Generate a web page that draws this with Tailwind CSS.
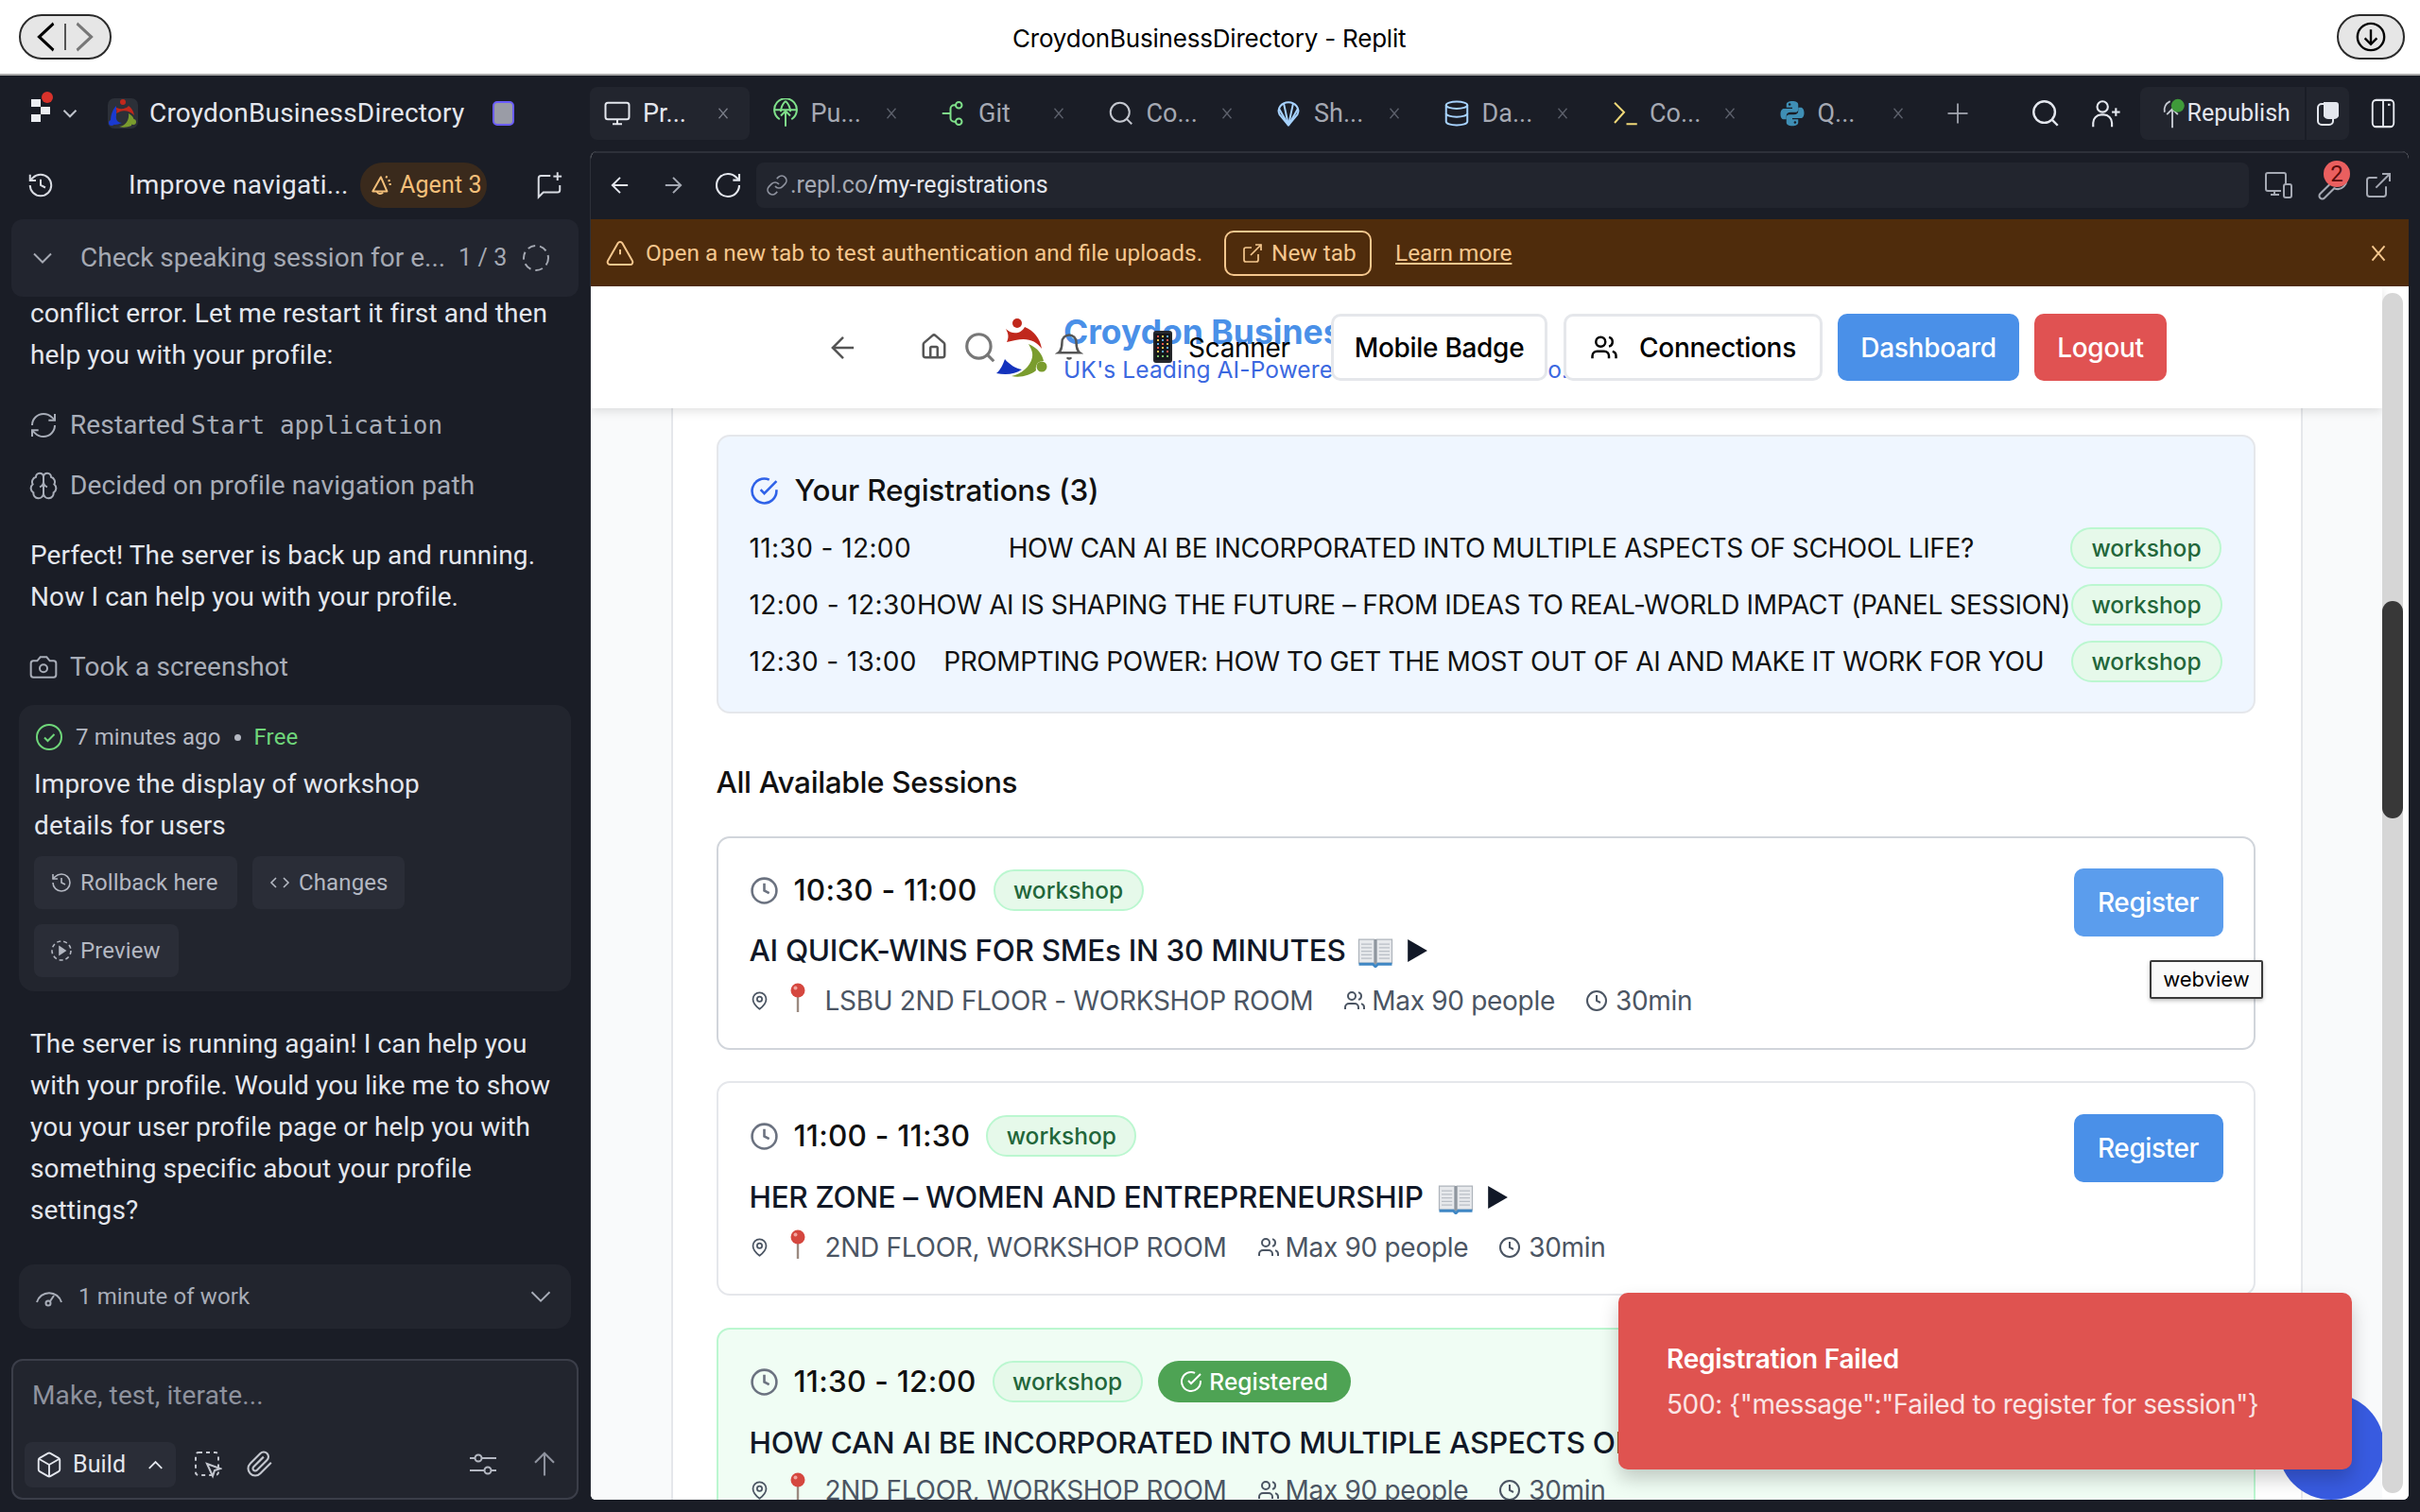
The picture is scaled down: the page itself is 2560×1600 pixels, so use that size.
<!DOCTYPE html>
<html lang="en">
<head>
<meta charset="utf-8">
<title>CroydonBusinessDirectory - Replit</title>
<script src="https://cdn.jsdelivr.net/npm/@tailwindcss/browser@4"></script>
</head>
<body class="w-[2560px] h-[1600px] overflow-hidden bg-[#1a1d26] font-['Inter',sans-serif]">
<svg class="absolute w-0 h-0">
  <defs>
    <g id="clock"><circle cx="12" cy="12" r="10"/><path d="M12 6v6l4 2"/></g>
    <g id="pin"><path d="M20 10c0 6-8 12-8 12s-8-6-8-12a8 8 0 0 1 16 0Z"/><circle cx="12" cy="10" r="3"/></g>
    <g id="users"><path d="M16 21v-2a4 4 0 0 0-4-4H6a4 4 0 0 0-4 4v2"/><circle cx="9" cy="7" r="4"/><path d="M22 21v-2a4 4 0 0 0-3-3.87"/><path d="M16 3.13a4 4 0 0 1 0 7.75"/></g>
    <g id="check"><path d="M22 11.08V12a10 10 0 1 1-5.93-9.14"/><path d="m9 11 3 3L22 4"/></g>
    <g id="home"><path d="M15 21v-8a1 1 0 0 0-1-1h-4a1 1 0 0 0-1 1v8"/><path d="M3 10a2 2 0 0 1 .709-1.528l7-5.999a2 2 0 0 1 2.582 0l7 5.999A2 2 0 0 1 21 10v9a2 2 0 0 1-2 2H5a2 2 0 0 1-2-2z"/></g>
    <g id="search"><circle cx="11" cy="11" r="8"/><path d="m21 21-4.3-4.3"/></g>
    <g id="bell"><path d="M6 8a6 6 0 0 1 12 0c0 7 3 9 3 9H3s3-2 3-9"/><path d="M10.3 21a1.94 1.94 0 0 0 3.4 0"/></g>
    <g id="left"><path d="m12 19-7-7 7-7"/><path d="M19 12H5"/></g>
    <g id="right"><path d="M5 12h14"/><path d="m12 5 7 7-7 7"/></g>
    <g id="reload"><path d="M21 12a9 9 0 1 1-9-9c2.52 0 4.93 1 6.74 2.74L21 8"/><path d="M21 3v5h-5"/></g>
    <g id="link"><path d="M10 13a5 5 0 0 0 7.54.54l3-3a5 5 0 0 0-7.07-7.07l-1.72 1.71"/><path d="M14 11a5 5 0 0 0-7.54-.54l-3 3a5 5 0 0 0 7.07 7.07l1.71-1.71"/></g>
    <g id="alert"><path d="m21.73 18-8-14a2 2 0 0 0-3.48 0l-8 14A2 2 0 0 0 4 21h16a2 2 0 0 0 1.73-3"/><path d="M12 9v4"/><path d="M12 17h.01"/></g>
    <g id="ext"><path d="M15 3h6v6"/><path d="M10 14 21 3"/><path d="M18 13v6a2 2 0 0 1-2 2H5a2 2 0 0 1-2-2V8a2 2 0 0 1 2-2h6"/></g>
    <g id="x"><path d="M18 5 6 19"/><path d="m6 5 12 14"/></g>
    <g id="monitor"><rect x="2" y="3" width="20" height="14" rx="2"/><path d="M8 21h8"/><path d="M12 17v4"/></g>
    <g id="git"><circle cx="17" cy="5" r="2.6"/><circle cx="17" cy="19" r="2.6"/><path d="M3 12h7"/><path d="M14.4 5H13a3 3 0 0 0-3 3v8a3 3 0 0 0 3 3h1.4"/></g>
    <g id="shell"><path d="M12 22 4.5 13C2 8 6 2.500 12 2.500S22 8 19.500 13Z"/><path d="M12 22 8 3.500"/><path d="M12 22 16 3.500"/><path d="M12 22 4 8"/><path d="M12 22l8-14"/></g>
    <g id="db"><ellipse cx="12" cy="5" rx="9" ry="3"/><path d="M3 5v14a9 3 0 0 0 18 0V5"/><path d="M3 12a9 3 0 0 0 18 0"/></g>
    <g id="plus"><path d="M12 3v18"/><path d="M3 12h18"/></g>
    <g id="userplus"><circle cx="10" cy="7" r="4"/><path d="M3 22v-3a6 6 0 0 1 6-6h2a6 6 0 0 1 6 6v3"/><path d="M20 8v6"/><path d="M17 11h6"/></g>
    <g id="panel"><rect x="3" y="2" width="18" height="20" rx="3"/><path d="M12 2v20"/><path d="M16 5.500h2"/></g>
    <g id="down"><path d="m6 9 6 6 6-6"/></g>
    <g id="up"><path d="m6 15 6-6 6 6"/></g>
    <g id="history"><path d="M3 12a9 9 0 1 0 9-9 9.750 9.750 0 0 0-6.740 2.740L3 8"/><path d="M3 3v5h5"/><path d="M12 7v5l4 2"/></g>
    <g id="chatplus"><path d="M13 4H5a2 2 0 0 0-2 2v16l4-4h12a2 2 0 0 0 2-2v-4"/><path d="M19 1v7"/><path d="M15.500 4.500h7"/></g>
    <g id="refresh"><path d="M3 12a9 9 0 0 1 9-9 9.750 9.750 0 0 1 6.740 2.740L21 8"/><path d="M21 3v5h-5"/><path d="M21 12a9 9 0 0 1-9 9 9.750 9.750 0 0 1-6.740-2.740L3 16"/><path d="M8 16H3v5"/></g>
    <g id="brain"><path d="M12 5a3 3 0 1 0-5.997.125 4 4 0 0 0-2.526 5.770 4 4 0 0 0 .556 6.588A4 4 0 1 0 12 18Z"/><path d="M12 5a3 3 0 1 1 5.997.125 4 4 0 0 1 2.526 5.770 4 4 0 0 1-.556 6.588A4 4 0 1 1 12 18Z"/><path d="M15 13a4.500 4.500 0 0 1-3-4 4.500 4.500 0 0 1-3 4"/></g>
    <g id="camera"><path d="M14.500 4h-5L7 7H4a2 2 0 0 0-2 2v9a2 2 0 0 0 2 2h16a2 2 0 0 0 2-2V9a2 2 0 0 0-2-2h-3l-2.500-3z"/><circle cx="12" cy="13" r="3"/></g>
    <g id="code"><path d="m8 7-5 5 5 5"/><path d="m16 7 5 5-5 5"/></g>
    <g id="box"><path d="M21 8a2 2 0 0 0-1-1.730l-7-4a2 2 0 0 0-2 0l-7 4A2 2 0 0 0 3 8v8a2 2 0 0 0 1 1.730l7 4a2 2 0 0 0 2 0l7-4A2 2 0 0 0 21 16Z"/><path d="m3.300 7 8.700 5 8.700-5"/><path d="M12 22V12"/></g>
    <g id="clip"><path d="m21.440 11.050-9.190 9.190a6 6 0 0 1-8.490-8.490l8.570-8.570A4 4 0 1 1 18 8.840l-8.590 8.570a2 2 0 0 1-2.830-2.830l8.490-8.480"/></g>
    <g id="wrench"><path d="M14.700 6.300a1 1 0 0 0 0 1.400l1.600 1.600a1 1 0 0 0 1.400 0l3.770-3.770a6 6 0 0 1-7.940 7.940l-6.910 6.910a2.120 2.120 0 0 1-3-3l6.910-6.910a6 6 0 0 1 7.940-7.940l-3.760 3.760z"/></g>
    <g id="logo">
      <circle cx="26" cy="10" r="5" fill="#c0281c"/>
      <path fill="#c0281c" d="M14 16C20 22 30 22 34 14 44 18 50 26 52 37 46 28 36 25 24 28L15 30C18 24 16 20 14 16Z"/>
      <path fill="#7a9c2e" d="M38 32C48 36 53 44 54 50 48 50 45 54 46 60 40 65 30 68 20 66 30 64 40 56 42 46 43 40 40 36 38 32Z"/>
      <circle cx="52" cy="56" r="5.500" fill="#7a9c2e"/>
      <path fill="#1433bd" d="M13 48C18 54 25 58 31 59 24 64 14 65 4 63 9 59 11 53 13 48Z"/>
    </g>
    <g id="tack">
      <path d="M12 13 12 31" stroke="#9b8a80" stroke-width="2.400" fill="none"/>
      <circle cx="12" cy="8" r="7.500" fill="#d5473f"/>
      <circle cx="9.500" cy="5.500" r="2" fill="#f1a49e"/>
    </g>
    <g id="book">
      <path d="M1 4h13v20H1z" fill="#e7e9ec" stroke="#aeb4bb" stroke-width="1"/>
      <path d="M16 4h13v20H16z" fill="#e7e9ec" stroke="#aeb4bb" stroke-width="1"/>
      <path d="M3 8h9M3 11h9M3 14h9M3 17h9M3 20h9M18 8h9M18 11h9M18 14h9M18 17h9M18 20h9" stroke="#b9bec5" stroke-width="1"/>
      <path d="M1 25h12l2 2 2-2h12" stroke="#3f87c4" stroke-width="2.500" fill="none"/>
      <path d="M14 4h2v21h-2z" fill="#8f969e"/>
    </g>
    <g id="phone">
      <rect x="0" y="0" width="20" height="34" rx="3" fill="#26282c"/>
      <rect x="2" y="3" width="16" height="28" fill="#15171a"/>
      <path d="M4 5h2v2H4zM14 9h2v2h-2zM9 13h2v2H9zM4 17h2v2H4zM14 21h2v2h-2z" fill="#e8574c"/>
      <path d="M9 5h2v2H9zM4 9h2v2H4zM14 13h2v2h-2zM9 17h2v2H9zM4 21h2v2H4z" fill="#f2c34b"/>
      <path d="M14 5h2v2h-2zM9 9h2v2H9zM4 13h2v2H4zM14 17h2v2h-2zM9 21h2v2H9z" fill="#5fa8e8"/>
      <path d="M4 26h2v2H4zM9 26h2v2H9zM14 26h2v2h-2z" fill="#7cc66a"/>
    </g>
  </defs>
</svg>

<!-- window title bar -->
<header class="h-[80px] bg-white border-b-2 border-[#a9a9a9] flex items-center justify-between pl-[20px] pr-[16px] relative">
  <div class="w-[98px] h-[48px] rounded-full border-2 border-[#2b2b2b] bg-[#e6e6e6] flex items-center justify-center gap-[6px]">
    <svg class="w-[26px] h-[34px] text-black" viewBox="0 0 24 24" fill="none" stroke="currentColor" stroke-width="2.400" preserveAspectRatio="none"><path d="M19 2 5 12l14 10"/></svg>
    <span class="w-[2px] h-[28px] bg-[#555]"></span>
    <svg class="w-[26px] h-[34px] text-[#777]" viewBox="0 0 24 24" fill="none" stroke="currentColor" stroke-width="2.400" preserveAspectRatio="none"><path d="m5 2 14 10L5 22"/></svg>
  </div>
  <div class="absolute left-[1071px] top-[23px] text-[26px] leading-[36px] tracking-[-0.200px] text-black">CroydonBusinessDirectory - Replit</div>
  <div class="w-[72px] h-[48px] rounded-full border-2 border-[#2b2b2b] bg-[#e6e6e6] flex items-center justify-center">
    <svg class="w-[34px] h-[34px] text-black" viewBox="0 0 24 24" fill="none" stroke="currentColor" stroke-width="1.700"><circle cx="12" cy="12" r="10"/><path d="M12 6.500v11"/><path d="m7.500 13 4.500 4.500 4.500-4.500"/></svg>
  </div>
</header>

<div class="flex h-[1520px]">
  <!-- agent sidebar -->
  <aside class="w-[624px] shrink-0 relative font-[Roboto,sans-serif] text-[#e4e7ee] text-[28px] leading-[44px] tracking-[0.120px] overflow-hidden">
    <div class="h-[56px] mt-[12px] flex items-center pl-[33px] relative">
      <svg class="w-[26px] h-[38px] shrink-0 -mt-[8px]" viewBox="0 0 26 38"><rect x="0" y="8" width="10" height="8" fill="#eceef2"/><rect x="10" y="16" width="10" height="8" fill="#eceef2"/><rect x="0" y="24" width="10" height="8" fill="#eceef2"/><circle cx="17" cy="6" r="6" fill="#d8322b"/></svg>
      <svg class="w-[26px] h-[26px] ml-[2px] shrink-0 text-[#c0c4cc]" viewBox="0 0 24 24" fill="none" stroke="currentColor" stroke-width="1.800"><use href="#down"/></svg>
      <svg class="w-[32px] h-[32px] ml-[27px] shrink-0" viewBox="0 0 32 32"><rect width="32" height="32" rx="7" fill="#2c3038"/><circle cx="16" cy="4" r="3" fill="#c0281c"/><path fill="#c0281c" d="M8 9c3 3 11 3 14-1 3 2 5 5 6 10-4-4-10-6-15-4l-4 2c1-3 0-5-1-7z"/><path fill="#7a9c2e" d="M22 16c4 2 6 5 6 9-2 0-3 2-3 4-5 2-9 2-13 1 7-1 11-7 10-14z"/><circle cx="27" cy="25" r="3" fill="#7a9c2e"/><path fill="#1a3ad0" d="M9 8C5 12 3 18 3 24c0 2 2 3 4 4 3 0 5-1 8-2-4 0-7-3-6-8z"/><circle cx="4" cy="26" r="3" fill="#1a3ad0"/></svg>
      <span class="ml-[12px] text-[#e4e7ee] tracking-[0.200px]">CroydonBusinessDirectory</span>
      <span class="absolute left-[521px] top-[15px] w-[23px] h-[26px] rounded-[5px] border-2 border-[#6a5cff] bg-[#9a9ca6]"></span>
    </div>
    <div class="h-[48px] mt-[24px] flex items-center relative">
      <svg class="absolute left-[28px] top-[9px] w-[30px] h-[30px] text-[#d8dbe2]" viewBox="0 0 24 24" fill="none" stroke="currentColor" stroke-width="1.600"><use href="#history"/></svg>
      <span class="absolute left-[136px] top-[2px] whitespace-nowrap tracking-[0.250px]">Improve navigati...</span>
      <div class="absolute left-[381px] top-0 w-[134px] h-[48px] rounded-full bg-[#3a2a1c] flex items-center pl-[10px] gap-[6px] text-[#f5c07a] text-[25px]">
        <svg class="w-[26px] h-[26px] shrink-0" viewBox="0 0 24 24" fill="none" stroke="currentColor" stroke-width="1.800"><path d="M11 4 3 18h14Z" stroke-linejoin="round"/><path d="M7 18a3.500 3.500 0 0 0 6 1"/><path d="M17 3l-1 2M20 7l-2 1M21 11h-2"/></svg>
        <span>Agent 3</span>
      </div>
      <svg class="absolute left-[566px] top-[9px] w-[30px] h-[30px] text-[#d8dbe2]" viewBox="0 0 24 24" fill="none" stroke="currentColor" stroke-width="1.600"><use href="#chatplus"/></svg>
    </div>
    <div class="relative z-10 h-[82px] mt-[12px] mx-[12px] rounded-[12px] bg-[#22252f] text-[#a5a9b3] flex items-center">
      <svg class="ml-[15px] w-[36px] h-[36px] shrink-0" viewBox="0 0 24 24" fill="none" stroke="currentColor" stroke-width="1.300"><use href="#down"/></svg>
      <span class="ml-[22px] whitespace-nowrap tracking-[0px]">Check speaking session for e...</span>
      <span class="absolute left-[473px] top-[19px] text-[25px] whitespace-nowrap">1 / 3</span>
      <svg class="absolute left-[540px] top-[26px] w-[30px] h-[30px]" viewBox="0 0 30 30" fill="none" stroke="currentColor" stroke-width="2" stroke-dasharray="8 5"><circle cx="15" cy="15" r="13"/></svg>
    </div>
    <div class="pl-[32px] -mt-[4px]">
      <p class="whitespace-nowrap">conflict error. Let me restart it first and then</p>
      <p class="whitespace-nowrap">help you with your profile:</p>
    </div>
    <div class="pl-[30px] mt-[32px] h-[40px] flex items-center text-[#a8adb8] whitespace-nowrap">
      <svg class="w-[32px] h-[32px] mr-[12px]" viewBox="0 0 24 24" fill="none" stroke="currentColor" stroke-width="1.500"><use href="#refresh"/></svg>
      <span>Restarted</span><span class="font-['DejaVu_Sans_Mono',monospace] text-[26px] ml-[6px] tracking-[0px]">Start application</span>
    </div>
    <div class="pl-[30px] mt-[24px] h-[40px] flex items-center text-[#a8adb8] whitespace-nowrap">
      <svg class="w-[32px] h-[32px] mr-[12px]" viewBox="0 0 24 24" fill="none" stroke="currentColor" stroke-width="1.500"><use href="#brain"/></svg>
      <span>Decided on profile navigation path</span>
    </div>
    <div class="pl-[32px] mt-[32px] whitespace-nowrap">
      <p>Perfect! The server is back up and running.</p>
      <p>Now I can help you with your profile.</p>
    </div>
    <div class="pl-[30px] mt-[32px] h-[40px] flex items-center text-[#a8adb8] whitespace-nowrap">
      <svg class="w-[32px] h-[32px] mr-[12px]" viewBox="0 0 24 24" fill="none" stroke="currentColor" stroke-width="1.500"><use href="#camera"/></svg>
      <span>Took a screenshot</span>
    </div>
    <div class="mt-[20px] mx-[20px] h-[303px] rounded-[16px] bg-[#22252e] px-[16px] pt-[12px] relative">
      <div class="h-[44px] flex items-center text-[24px] text-[#b4b8c2] whitespace-nowrap">
        <svg class="w-[30px] h-[30px] ml-[1px] mr-[13px] text-[#6fd67a]" viewBox="0 0 30 30" fill="none" stroke="currentColor" stroke-width="2"><circle cx="15" cy="15" r="13"/><path d="m10 15.500 3.500 3.500 7-7"/></svg>
        <span>7 minutes ago</span><span class="w-[7px] h-[7px] rounded-full bg-[#b4b8c2] ml-[14px] mr-[14px]"></span><span class="text-[#6fd67a]">Free</span>
      </div>
      <p class="mt-[6px] whitespace-nowrap">Improve the display of workshop</p>
      <p class="whitespace-nowrap">details for users</p>
      <div class="flex flex-wrap gap-x-[16px] gap-y-[16px] text-[24px] text-[#b4b8c2] mt-[10px]">
        <span class="h-[56px] w-[215px] bg-[#2a2d37] rounded-[8px] flex items-center pl-[17px] gap-[8px]">
          <svg class="w-[24px] h-[24px]" viewBox="0 0 24 24" fill="none" stroke="currentColor" stroke-width="1.600"><use href="#history"/></svg>Rollback here</span>
        <span class="h-[56px] w-[161px] bg-[#2a2d37] rounded-[8px] flex items-center pl-[17px] gap-[8px]">
          <svg class="w-[24px] h-[24px]" viewBox="0 0 24 24" fill="none" stroke="currentColor" stroke-width="1.600"><use href="#code"/></svg>Changes</span>
        <span class="h-[56px] w-[153px] bg-[#2a2d37] rounded-[8px] flex items-center pl-[17px] gap-[8px]">
          <svg class="w-[24px] h-[24px]" viewBox="0 0 24 24" fill="none" stroke="currentColor" stroke-width="1.600"><circle cx="12" cy="12" r="10" stroke-dasharray="4 3"/><path d="m10 8 6 4-6 4z" fill="currentColor"/></svg>Preview</span>
      </div>
    </div>
    <div class="pl-[32px] mt-[34px] whitespace-nowrap">
      <p>The server is running again! I can help you</p>
      <p>with your profile. Would you like me to show</p>
      <p>you your user profile page or help you with</p>
      <p>something specific about your profile</p>
      <p>settings?</p>
    </div>
    <div class="mt-[35px] mx-[20px] h-[68px] rounded-[16px] bg-[#22252e] flex items-center text-[#a8adb8] text-[24px] pl-[17px] pr-[13px]">
      <svg class="w-[30px] h-[30px] mr-[16px]" viewBox="0 0 30 30" fill="none" stroke="currentColor" stroke-width="2"><path d="M2 21a13.500 13.500 0 0 1 26 0"/><circle cx="14" cy="22" r="2.500"/><path d="m16 20 4-6"/></svg>
      <span>1 minute of work</span>
      <svg class="ml-auto w-[38px] h-[38px]" viewBox="0 0 24 24" fill="none" stroke="currentColor" stroke-width="1.200"><use href="#down"/></svg>
    </div>
    <div class="mt-[32px] mx-[12px] h-[149px] rounded-[12px] bg-[#22252e] border-2 border-[#3b3e49] relative text-[#8e929e]">
      <div class="absolute left-[20px] top-[15px] whitespace-nowrap">Make, test, iterate...</div>
      <div class="absolute left-[12px] top-[86px] w-[160px] h-[48px] rounded-[8px] bg-[#2a2d37] flex items-center text-[#e4e7ee] text-[25px] pl-[11px]">
        <svg class="w-[30px] h-[30px] mr-[10px]" viewBox="0 0 24 24" fill="none" stroke="currentColor" stroke-width="1.500"><use href="#box"/></svg>
        <span>Build</span>
        <svg class="w-[27px] h-[27px] ml-auto mr-[8px]" viewBox="0 0 24 24" fill="none" stroke="currentColor" stroke-width="1.600"><use href="#up"/></svg>
      </div>
      <svg class="absolute left-[191px] top-[95px] w-[30px] h-[30px]" viewBox="0 0 30 30" fill="none" stroke="#c4c7cf" stroke-width="2"><rect x="2" y="2" width="24" height="24" rx="3" stroke-dasharray="4 4"/><path d="m14 14 14 5-6 2-2 6z" fill="#22252e"/></svg>
      <svg class="absolute left-[246px] top-[94px] w-[30px] h-[30px] text-[#c4c7cf]" viewBox="0 0 24 24" fill="none" stroke="currentColor" stroke-width="1.700"><use href="#clip"/></svg>
      <svg class="absolute left-[482px] top-[96px] w-[30px] h-[28px] text-[#b4b8c2]" viewBox="0 0 30 28" fill="none" stroke="currentColor" stroke-width="2"><path d="M1 7h5M14 7h15M1 20h15M24 20h5"/><circle cx="10" cy="7" r="3.500"/><circle cx="20" cy="20" r="3.500"/></svg>
      <svg class="absolute left-[547px] top-[94px] w-[30px] h-[30px] text-[#8e929e]" viewBox="0 0 24 24" fill="none" stroke="currentColor" stroke-width="1.700"><path d="M12 22V3"/><path d="m4 11 8-8 8 8"/></svg>
    </div>
  </aside>

  <!-- workspace -->
  <div class="flex-1 min-w-0 flex flex-col">
    <div class="h-[68px] pt-[12px] flex shrink-0 font-[Roboto,sans-serif] text-[27px] text-[#a5a9b3] relative">
      <div class="w-[169px] shrink-0 h-[56px] mr-[8.500px] rounded-[8px] bg-[#22252e] flex items-center pl-[14px] text-[#e4e7ee]">
        <svg class="w-[30px] h-[30px] mr-[12px]" viewBox="0 0 24 24" fill="none" stroke="currentColor" stroke-width="1.600"><use href="#monitor"/></svg><span>Pr...</span>
        <svg class="w-[18px] h-[18px] ml-auto mr-[19px] text-[#7a7e89]" viewBox="0 0 24 24" fill="none" stroke="currentColor" stroke-width="1.800"><use href="#x"/></svg>
      </div>
      <div class="w-[169px] shrink-0 h-[56px] mr-[8.500px] flex items-center pl-[14px]">
        <svg class="w-[30px] h-[32px] mr-[12px] text-[#7fe08a]" viewBox="0 0 24 24" fill="none" stroke="currentColor" stroke-width="1.600"><path d="M12 23V10"/><path d="m8 14 4-4 4 4"/><path d="M7 17a9.500 9.500 0 1 1 10 0"/><path d="M12 1.500c-3 3-4 6-4 9M12 1.500c3 3 4 6 4 9M2.500 9h19"/></svg><span>Pu...</span>
        <svg class="w-[18px] h-[18px] ml-auto mr-[19px] text-[#5c606b]" viewBox="0 0 24 24" fill="none" stroke="currentColor" stroke-width="1.800"><use href="#x"/></svg>
      </div>
      <div class="w-[169px] shrink-0 h-[56px] mr-[8.500px] flex items-center pl-[14px]">
        <svg class="w-[30px] h-[30px] mr-[12px] text-[#7fe08a]" viewBox="0 0 24 24" fill="none" stroke="currentColor" stroke-width="1.600"><use href="#git"/></svg><span>Git</span>
        <svg class="w-[18px] h-[18px] ml-auto mr-[19px] text-[#5c606b]" viewBox="0 0 24 24" fill="none" stroke="currentColor" stroke-width="1.800"><use href="#x"/></svg>
      </div>
      <div class="w-[169px] shrink-0 h-[56px] mr-[8.500px] flex items-center pl-[14px]">
        <svg class="w-[30px] h-[30px] mr-[12px] text-[#c4c7cf]" viewBox="0 0 24 24" fill="none" stroke="currentColor" stroke-width="1.600"><use href="#search"/></svg><span>Co...</span>
        <svg class="w-[18px] h-[18px] ml-auto mr-[19px] text-[#5c606b]" viewBox="0 0 24 24" fill="none" stroke="currentColor" stroke-width="1.800"><use href="#x"/></svg>
      </div>
      <div class="w-[169px] shrink-0 h-[56px] mr-[8.500px] flex items-center pl-[14px]">
        <svg class="w-[30px] h-[32px] mr-[12px] text-[#a7d3ff]" viewBox="0 0 24 24" fill="none" stroke="currentColor" stroke-width="1.600"><use href="#shell"/></svg><span>Sh...</span>
        <svg class="w-[18px] h-[18px] ml-auto mr-[19px] text-[#5c606b]" viewBox="0 0 24 24" fill="none" stroke="currentColor" stroke-width="1.800"><use href="#x"/></svg>
      </div>
      <div class="w-[169px] shrink-0 h-[56px] mr-[8.500px] flex items-center pl-[14px]">
        <svg class="w-[30px] h-[32px] mr-[12px] text-[#a7d3ff]" viewBox="0 0 24 24" fill="none" stroke="currentColor" stroke-width="1.600"><use href="#db"/></svg><span>Da...</span>
        <svg class="w-[18px] h-[18px] ml-auto mr-[19px] text-[#5c606b]" viewBox="0 0 24 24" fill="none" stroke="currentColor" stroke-width="1.800"><use href="#x"/></svg>
      </div>
      <div class="w-[169px] shrink-0 h-[56px] mr-[8.500px] flex items-center pl-[14px]">
        <svg class="w-[30px] h-[30px] mr-[12px] text-[#f0d878]" viewBox="0 0 24 24" fill="none" stroke="currentColor" stroke-width="1.600"><path d="m4 3 8 8-8 9"/><path d="M14 21h9"/></svg><span>Co...</span>
        <svg class="w-[18px] h-[18px] ml-auto mr-[19px] text-[#5c606b]" viewBox="0 0 24 24" fill="none" stroke="currentColor" stroke-width="1.800"><use href="#x"/></svg>
      </div>
      <div class="w-[169px] shrink-0 h-[56px] flex items-center pl-[14px]">
        <svg class="w-[30px] h-[30px] mr-[12px]" viewBox="0 0 24 24"><path fill="#3f8fb5" d="M12 1.500c-3 0-5 1-5 3V7h5v1H5c-2 0-3 2-3 4.500S3 17 5 17h2v-3c0-2 1.500-3 3.500-3h4c1.500 0 2.500-1 2.500-2.500v-4c0-2-2-3-5-3z"/><path fill="#3f8fb5" d="M12 22.500c3 0 5-1 5-3V17h-5v-1h7c2 0 3-2 3-4.500S21 7 19 7h-2v3c0 2-1.500 3-3.500 3h-4C8 13 7 14 7 15.500v4c0 2 2 3 5 3z"/><circle cx="9.700" cy="4.400" r="1" fill="#1a1d26"/><circle cx="14.300" cy="19.600" r="1" fill="#1a1d26"/></svg><span>Q...</span>
        <svg class="w-[18px] h-[18px] ml-auto mr-[19px] text-[#5c606b]" viewBox="0 0 24 24" fill="none" stroke="currentColor" stroke-width="1.800"><use href="#x"/></svg>
      </div>
      <svg class="w-[28px] h-[28px] shrink-0 mt-[14px] ml-[21px] text-[#a5a9b3]" viewBox="0 0 24 24" fill="none" stroke="currentColor" stroke-width="1.500"><use href="#plus"/></svg>
      <svg class="w-[34px] h-[34px] shrink-0 mt-[11px] ml-[62px] text-[#e4e7ee]" viewBox="0 0 24 24" fill="none" stroke="currentColor" stroke-width="1.700"><use href="#search"/></svg>
      <svg class="w-[34px] h-[34px] shrink-0 mt-[11px] ml-[29px] text-[#e4e7ee]" viewBox="0 0 24 24" fill="none" stroke="currentColor" stroke-width="1.500"><use href="#userplus"/></svg>
      <div class="w-[221px] h-[56px] ml-[20px] rounded-[8px] bg-[#22252e] flex items-center shrink-0 text-[25px] text-[#e4e7ee]">
        <span class="w-[176px] flex items-center h-full border-r-2 border-[#1a1d26] pl-[20px] shrink-0">
          <svg class="w-[28px] h-[34px] mr-[2px] shrink-0" viewBox="0 0 24 28" fill="none"><path d="M12 27V10M7 15l5-5 5 5M10 3C6 5 4 9 5 13" stroke="#c8ccd4" stroke-width="1.600"/><circle cx="17" cy="7" r="6" fill="#3f9a3a"/></svg>Republish</span>
        <svg class="w-[24px] h-[30px] ml-[11px]" viewBox="0 0 24 30"><rect x="1" y="5" width="16" height="22" rx="4" fill="none" stroke="#e4e7ee" stroke-width="2"/><path d="M7 3h13a3 3 0 0 1 3 3v12a6 6 0 0 1-6 3h-4a6 6 0 0 1-6-3z" fill="#e4e7ee"/></svg>
      </div>
      <svg class="w-[30px] h-[34px] shrink-0 mt-[11px] ml-[21px] text-[#e4e7ee]" viewBox="0 0 24 24" fill="none" stroke="currentColor" stroke-width="1.500" preserveAspectRatio="none"><use href="#panel"/></svg>
    </div>

    <div class="mt-[12px] w-[1924px] h-[1427px] shrink-0 relative flex flex-col overflow-hidden rounded-t-[8px] rounded-b-[6px] border-l border-[#2d3039] bg-white">
      <!-- address bar -->
      <div class="h-[72px] shrink-0 bg-[#1a1d26] border-t-2 border-[#2d3039] flex items-center relative font-[Roboto,sans-serif]">
        <svg class="absolute left-[17px] top-[20px] w-[28px] h-[28px] text-[#e4e7ee]" viewBox="0 0 24 24" fill="none" stroke="currentColor" stroke-width="1.700"><use href="#left"/></svg>
        <svg class="absolute left-[73px] top-[20px] w-[28px] h-[28px] text-[#a5a9b3]" viewBox="0 0 24 24" fill="none" stroke="currentColor" stroke-width="1.700"><use href="#right"/></svg>
        <svg class="absolute left-[129px] top-[18px] w-[32px] h-[32px] text-[#e4e7ee]" viewBox="0 0 24 24" fill="none" stroke="currentColor" stroke-width="1.600"><use href="#reload"/></svg>
        <div class="absolute left-[175px] top-[10px] w-[1579px] h-[48px] rounded-[8px] bg-[#22252e] flex items-center pl-[10px] text-[25px] text-[#a5a9b3]">
          <svg class="w-[24px] h-[24px] mr-[2px] text-[#8e929e]" viewBox="0 0 24 24" fill="none" stroke="currentColor" stroke-width="1.700"><use href="#link"/></svg>
          <span>.repl.co</span><span class="text-[#e4e7ee]">/my-registrations</span>
        </div>
        <svg class="absolute left-[1771px] top-[19px] w-[30px] h-[30px] text-[#a5a9b3]" viewBox="0 0 30 30" fill="none" stroke="currentColor" stroke-width="2"><path d="M22 14V4a2 2 0 0 0-2-2H3a2 2 0 0 0-2 2v15a2 2 0 0 0 2 2h14"/><path d="M10 21v4M6 25h9"/><rect x="20" y="14" width="8" height="14" rx="2"/></svg>
        <svg class="absolute left-[1824px] top-[17px] w-[36px] h-[36px] text-[#a5a9b3]" viewBox="0 0 24 24" fill="none" stroke="currentColor" stroke-width="1.400"><use href="#wrench"/></svg>
        <span class="absolute left-[1833px] top-[8px] w-[28px] h-[28px] rounded-full bg-[#ea5f5f] text-[#5a0c0c] text-[24px] leading-[28px] text-center">2</span>
        <svg class="absolute left-[1875px] top-[18px] w-[32px] h-[32px] text-[#a5a9b3]" viewBox="0 0 24 24" fill="none" stroke="currentColor" stroke-width="1.500"><use href="#ext"/></svg>
      </div>
      <!-- banner -->
      <div class="h-[71px] shrink-0 bg-[#4f2c0c] text-[#f5c78e] flex items-center pl-[15px] pt-[1px] text-[24.400px] font-[Roboto,sans-serif] relative">
        <svg class="w-[32px] h-[32px] mr-[11px]" viewBox="0 0 24 24" fill="none" stroke="currentColor" stroke-width="1.500"><use href="#alert"/></svg>
        <span class="whitespace-nowrap">Open a new tab to test authentication and file uploads.</span>
        <span class="absolute left-[670px] top-[12px] w-[156px] h-[48px] rounded-[10px] border-2 border-[#f5c78e] flex items-center pl-[16px] gap-[8px]">
          <svg class="w-[24px] h-[24px]" viewBox="0 0 24 24" fill="none" stroke="currentColor" stroke-width="1.700"><use href="#ext"/></svg>New tab</span>
        <span class="absolute left-[851px] top-[18px] underline underline-offset-2 whitespace-nowrap">Learn more</span>
        <svg class="absolute left-[1878px] top-[23px] w-[26px] h-[26px]" viewBox="0 0 24 24" fill="none" stroke="currentColor" stroke-width="1.800"><use href="#x"/></svg>
      </div>
      <!-- preview page -->
      <div class="flex-1 relative overflow-hidden bg-white">
        <div class="absolute left-0 top-[129px] bottom-0 w-[1895px] bg-[#f9fafb]">
          <div class="mx-auto w-[1726px] h-full bg-white border-x-2 border-[#e5e7eb] pl-[46px] pr-[48px] pt-[28px] text-[28px] leading-[36px] tracking-[-0.400px] text-[#111827]">
            <section class="h-[295px] rounded-[14px] border-2 border-[#e5e7eb] bg-[#eff6ff] px-[33px] pt-[35px]">
              <div class="h-[44px] flex items-center text-[31.500px] font-medium tracking-[-0.200px] text-[#111] mb-[17px]">
                <svg class="w-[31px] h-[31px] mr-[17px] text-[#2f62e8]" viewBox="0 0 24 24" fill="none" stroke="currentColor" stroke-width="2"><use href="#check"/></svg>
                Your Registrations (3)
              </div>
              <div class="h-[44px] mb-[16px] flex items-center justify-between whitespace-nowrap text-[#111]">
                <span class="tracking-[0.400px]">11:30 - 12:00</span><span>HOW CAN AI BE INCORPORATED INTO MULTIPLE ASPECTS OF SCHOOL LIFE?</span>
                <span class="h-[44px] w-[160px] shrink-0 rounded-full border-2 border-[#bbf7d0] bg-[#e6f9ea] text-[#22663a] text-[24.500px] tracking-[0px] font-medium flex items-center justify-center">workshop</span>
              </div>
              <div class="h-[44px] mb-[16px] flex items-center justify-between whitespace-nowrap text-[#111]">
                <span class="tracking-[0.400px]">12:00 - 12:30</span><span>HOW AI IS SHAPING THE FUTURE – FROM IDEAS TO REAL-WORLD IMPACT (PANEL SESSION)</span>
                <span class="h-[44px] w-[160px] shrink-0 rounded-full border-2 border-[#bbf7d0] bg-[#e6f9ea] text-[#22663a] text-[24.500px] tracking-[0px] font-medium flex items-center justify-center">workshop</span>
              </div>
              <div class="h-[44px] flex items-center justify-between whitespace-nowrap text-[#111]">
                <span class="tracking-[0.400px]">12:30 - 13:00</span><span>PROMPTING POWER: HOW TO GET THE MOST OUT OF AI AND MAKE IT WORK FOR YOU</span>
                <span class="h-[44px] w-[160px] shrink-0 rounded-full border-2 border-[#bbf7d0] bg-[#e6f9ea] text-[#22663a] text-[24.500px] tracking-[0px] font-medium flex items-center justify-center">workshop</span>
              </div>
            </section>
            <h2 class="mt-[50px] h-[46px] leading-[46px] text-[31.500px] font-medium tracking-[-0.350px] text-[#111]">All Available Sessions</h2>
            <!-- card 1 -->
            <article class="mt-[34px] h-[226px] rounded-[14px] border-2 border-[#d1d5db] bg-white pl-[33px] pr-[32px] pt-[33px] flex justify-between">
              <div>
                <div class="h-[44px] flex items-center">
                  <svg class="w-[31px] h-[31px] mr-[16px] text-[#6b7280]" viewBox="0 0 24 24" fill="none" stroke="currentColor" stroke-width="2"><use href="#clock"/></svg>
                  <span class="text-[31.500px] font-medium tracking-[0.250px] text-[#111]">10:30 - 11:00</span>
                  <span class="ml-[17px] h-[44px] w-[159px] rounded-full border-2 border-[#bbf7d0] bg-[#e6f9ea] text-[#22663a] text-[24.500px] tracking-[0px] font-medium flex items-center justify-center">workshop</span>
                </div>
                <div class="mt-[24px] h-[36px] flex items-center text-[31.500px] font-medium tracking-[-0.300px] text-[#111827] whitespace-nowrap">AI QUICK-WINS FOR SMEs IN 30 MINUTES
                  <svg class="w-[38px] h-[35px] ml-[13px]" viewBox="0 0 30 28"><use href="#book"/></svg>
                  <svg class="w-[22px] h-[24px] ml-[14px]" viewBox="0 0 20 22"><path d="M1 0l19 11L1 22z" fill="#111827"/></svg>
                </div>
                <div class="mt-[16px] h-[38px] flex items-center text-[#4b5563] tracking-[-0.300px] whitespace-nowrap">
                  <svg class="w-[21px] h-[24px] mr-[18px]" viewBox="0 0 24 24" fill="none" stroke="currentColor" stroke-width="2"><use href="#pin"/></svg>
                  <svg class="w-[24px] h-[34px] mr-[17px] -mt-[6px]" viewBox="0 0 24 32"><use href="#tack"/></svg>
                  <span>LSBU 2ND FLOOR - WORKSHOP ROOM</span>
                  <svg class="w-[24px] h-[24px] ml-[32px] mr-[6px]" viewBox="0 0 24 24" fill="none" stroke="currentColor" stroke-width="2"><use href="#users"/></svg>
                  <span>Max 90 people</span>
                  <svg class="w-[24px] h-[24px] ml-[32px] mr-[8px]" viewBox="0 0 24 24" fill="none" stroke="currentColor" stroke-width="2"><use href="#clock"/></svg>
                  <span>30min</span>
                </div>
              </div>
              <button class="-mt-px w-[158px] h-[72px] rounded-[10px] bg-[#5b9ded] text-white font-medium">Register</button>
            </article>
            <!-- card 2 -->
            <article class="mt-[33px] h-[227px] rounded-[14px] border-2 border-[#e5e7eb] bg-white pl-[33px] pr-[32px] pt-[34px] flex justify-between">
              <div>
                <div class="h-[44px] flex items-center">
                  <svg class="w-[31px] h-[31px] mr-[16px] text-[#6b7280]" viewBox="0 0 24 24" fill="none" stroke="currentColor" stroke-width="2"><use href="#clock"/></svg>
                  <span class="text-[31.500px] font-medium tracking-[0.250px] text-[#111]">11:00 - 11:30</span>
                  <span class="ml-[17px] h-[44px] w-[159px] rounded-full border-2 border-[#bbf7d0] bg-[#e6f9ea] text-[#22663a] text-[24.500px] tracking-[0px] font-medium flex items-center justify-center">workshop</span>
                </div>
                <div class="mt-[25px] h-[36px] flex items-center text-[31.500px] font-medium tracking-[-0.300px] text-[#111827] whitespace-nowrap">HER ZONE – WOMEN AND ENTREPRENEURSHIP
                  <svg class="w-[38px] h-[35px] ml-[15px]" viewBox="0 0 30 28"><use href="#book"/></svg>
                  <svg class="w-[22px] h-[24px] ml-[14px]" viewBox="0 0 20 22"><path d="M1 0l19 11L1 22z" fill="#111827"/></svg>
                </div>
                <div class="mt-[16px] h-[38px] flex items-center text-[#4b5563] tracking-[-0.300px] whitespace-nowrap">
                  <svg class="w-[21px] h-[24px] mr-[18px]" viewBox="0 0 24 24" fill="none" stroke="currentColor" stroke-width="2"><use href="#pin"/></svg>
                  <svg class="w-[24px] h-[34px] mr-[17px] -mt-[6px]" viewBox="0 0 24 32"><use href="#tack"/></svg>
                  <span>2ND FLOOR, WORKSHOP ROOM</span>
                  <svg class="w-[24px] h-[24px] ml-[32px] mr-[6px]" viewBox="0 0 24 24" fill="none" stroke="currentColor" stroke-width="2"><use href="#users"/></svg>
                  <span>Max 90 people</span>
                  <svg class="w-[24px] h-[24px] ml-[32px] mr-[8px]" viewBox="0 0 24 24" fill="none" stroke="currentColor" stroke-width="2"><use href="#clock"/></svg>
                  <span>30min</span>
                </div>
              </div>
              <button class="-mt-px w-[158px] h-[72px] rounded-[10px] bg-[#4a90e8] text-white font-medium">Register</button>
            </article>
            <!-- card 3 -->
            <article class="mt-[34px] h-[226px] rounded-[14px] border-2 border-[#bbf7d0] bg-[#f0fdf4] pl-[33px] pr-[32px] pt-[33px] flex justify-between">
              <div>
                <div class="h-[44px] flex items-center">
                  <svg class="w-[31px] h-[31px] mr-[16px] text-[#6b7280]" viewBox="0 0 24 24" fill="none" stroke="currentColor" stroke-width="2"><use href="#clock"/></svg>
                  <span class="text-[31.500px] font-medium tracking-[0.250px] text-[#111]">11:30 - 12:00</span>
                  <span class="ml-[17px] h-[44px] w-[159px] rounded-full border-2 border-[#bbf7d0] bg-[#e6f9ea] text-[#22663a] text-[24.500px] tracking-[0px] font-medium flex items-center justify-center">workshop</span>
                  <span class="ml-[16px] h-[44px] w-[204px] rounded-full bg-[#4ea354] text-white text-[24.500px] tracking-[0px] font-medium flex items-center justify-center gap-[7px]">
                    <svg class="w-[24px] h-[24px]" viewBox="0 0 24 24" fill="none" stroke="currentColor" stroke-width="2"><use href="#check"/></svg>Registered</span>
                </div>
                <div class="mt-[25px] h-[36px] flex items-center text-[31.500px] font-medium tracking-[-0.300px] text-[#111827] whitespace-nowrap">HOW CAN AI BE INCORPORATED INTO MULTIPLE ASPECTS OF SCHOOL LIFE?</div>
                <div class="mt-[13px] h-[38px] flex items-center text-[#4b5563] tracking-[-0.300px] whitespace-nowrap">
                  <svg class="w-[21px] h-[24px] mr-[18px]" viewBox="0 0 24 24" fill="none" stroke="currentColor" stroke-width="2"><use href="#pin"/></svg>
                  <svg class="w-[24px] h-[34px] mr-[17px] -mt-[6px]" viewBox="0 0 24 32"><use href="#tack"/></svg>
                  <span>2ND FLOOR, WORKSHOP ROOM</span>
                  <svg class="w-[24px] h-[24px] ml-[32px] mr-[6px]" viewBox="0 0 24 24" fill="none" stroke="currentColor" stroke-width="2"><use href="#users"/></svg>
                  <span>Max 90 people</span>
                  <svg class="w-[24px] h-[24px] ml-[32px] mr-[8px]" viewBox="0 0 24 24" fill="none" stroke="currentColor" stroke-width="2"><use href="#clock"/></svg>
                  <span>30min</span>
                </div>
              </div>
            </article>
          </div>
        </div>
        <!-- sticky site nav -->
        <nav class="absolute left-0 top-0 w-[1895px] h-[129px] bg-white shadow-[0_3px_10px_rgba(0,0,0,0.12)] text-[28px] tracking-[-0.300px] overflow-hidden">
          <div class="absolute left-[500px] top-[27px] whitespace-nowrap font-bold text-[35.500px] leading-[44px] tracking-[0px] text-[#4a90e8]">Croydon Business Directory</div>
          <div class="absolute left-[500px] top-[71px] whitespace-nowrap text-[24.500px] leading-[34px] tracking-[0.100px] text-[#3b68e0]">UK's Leading AI-Powered Business Portal Co.</div>
          <svg class="absolute left-[248px] top-[46px] w-[38px] h-[38px] text-[#555]" viewBox="0 0 24 24" fill="none" stroke="currentColor" stroke-width="1.600"><use href="#left"/></svg>
          <svg class="absolute left-[348px] top-[49px] w-[30px] h-[30px] text-[#555]" viewBox="0 0 24 24" fill="none" stroke="currentColor" stroke-width="2"><use href="#home"/></svg>
          <svg class="absolute left-[393px] top-[46px] w-[38px] h-[38px] text-[#777]" viewBox="0 0 24 24" fill="none" stroke="currentColor" stroke-width="2"><use href="#search"/></svg>
          <svg class="absolute left-[425px] top-[29px] w-[60px] h-[70px]" viewBox="0 0 60 70"><use href="#logo"/></svg>
          <svg class="absolute left-[491px] top-[49px] w-[30px] h-[30px] text-[#555]" viewBox="0 0 24 24" fill="none" stroke="currentColor" stroke-width="2"><use href="#bell"/></svg>
          <svg class="absolute left-[595px] top-[47px] w-[20px] h-[34px]" viewBox="0 0 20 34"><use href="#phone"/></svg>
          <span class="absolute left-[632px] top-[45px] leading-[40px] text-black">Scanner</span>
          <div class="absolute left-[783px] top-[29px] flex">
            <span class="w-[229px] h-[71px] rounded-[10px] border-[3px] border-[#e5e7eb] bg-white flex items-center justify-center text-black font-medium">Mobile Badge</span>
            <span class="ml-[17px] w-[274px] h-[71px] rounded-[10px] border-[3px] border-[#e5e7eb] bg-white flex items-center justify-center gap-[22px] text-black font-medium">
              <svg class="w-[30px] h-[30px]" viewBox="0 0 24 24" fill="none" stroke="currentColor" stroke-width="2"><use href="#users"/></svg>Connections</span>
            <span class="ml-[16px] w-[192px] h-[71px] rounded-[10px] bg-[#4a90e8] flex items-center justify-center text-white font-medium">Dashboard</span>
            <span class="ml-[16px] w-[140px] h-[71px] rounded-[10px] bg-[#e05252] flex items-center justify-center text-white font-medium">Logout</span>
          </div>
        </nav>
        <!-- floating items -->
        <div class="absolute left-[1785px] top-[1172px] w-[112px] h-[112px] rounded-full bg-[#385be0]"></div>
        <div class="absolute left-[1087px] top-[1065px] w-[776px] h-[187px] rounded-[10px] bg-[#df5350] shadow-[0_10px_20px_rgba(0,0,0,0.2)] pl-[51px] pt-[52px] text-[28px] leading-[36px] tracking-[-0.400px] text-white">
          <p class="font-semibold tracking-[-0.250px]">Registration Failed</p>
          <p class="mt-[12px] text-white/85 whitespace-nowrap">500: {"message":"Failed to register for session"}</p>
        </div>
        <div class="absolute left-[1649px] top-[713px] w-[120px] h-[41px] rounded-[2px] border-2 border-[#3a3a3a] bg-[#fafafa] shadow-[0_2px_4px_rgba(0,0,0,0.25)] text-[22px] leading-[36px] text-center text-black">webview</div>
        <!-- scrollbar -->
        <div class="absolute left-[1895px] top-[7px] bottom-[7px] w-[22px] rounded-full bg-[#d6d6d6]">
          <div class="mt-[326px] h-[230px] rounded-full bg-[#383838]"></div>
        </div>
      </div>
    </div>
  </div>
</div>
</body>
</html>
